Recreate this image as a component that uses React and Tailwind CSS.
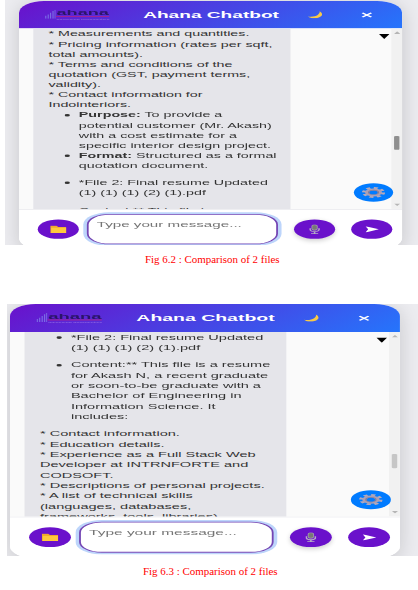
import React from "react";

function Logo() {
  return (
    <div className="relative h-[27px] w-[72px] font-bold text-[#2b1468]">
      <svg className="absolute left-0 top-[2px] h-[21px] w-[12px]" viewBox="0 0 12 21">
        <path d="M1 14v7M3.700 11v10M6.400 7v14M9.100 3v18M11.500 0v21" stroke="#7d74e6" strokeWidth="1.200" fill="none" />
      </svg>
      <span className="absolute left-[13px] top-[2px] origin-left scale-x-[1.27] text-[16px] leading-[16px]">ahana</span>
      <span className="absolute left-[12px] top-[17px] h-[2px] w-[60px] bg-[#b0208c]" />
      <span className="absolute left-[13px] top-[20px] origin-left scale-x-[1.04] whitespace-nowrap text-[5.300px] leading-[6px] text-[#8a63e0]">unlocking possibilities</span>
    </div>
  );
}

function Moon() {
  return (
    <svg className="h-[17px] w-[17px]" viewBox="0 0 17 17">
      <path d="M13.500 0.500C18 6 17 12.500 12 15.500C8 18 3 17 0.500 12.500C5 14 9 12.500 11.500 9C13.500 6 14 3 13.500 0.500Z" fill="#f7c948" />
    </svg>
  );
}

function Gear() {
  return (
    <svg className="h-[26px] w-[26px]" viewBox="0 0 28 28" fill="none">
      <circle cx="14" cy="14" r="11.500" stroke="#b3a9bd" strokeWidth="5" strokeDasharray="4.800 4.230" />
      <circle cx="14" cy="14" r="7.800" stroke="#aaa0b6" strokeWidth="5" />
      <circle cx="14" cy="14" r="6" stroke="#857d99" strokeWidth="1.500" />
    </svg>
  );
}

function RoundButton({ children, className = "" }) {
  return (
    <button className={"flex size-[46px] shrink-0 items-center justify-center rounded-full bg-[#6a11cb] " + className}>
      {children}
    </button>
  );
}

function ChatWidget({ children, thumb, offset }) {
  return (
    <div className="flex h-[590px] w-[429px] flex-col overflow-hidden rounded-[28px] bg-white font-['Liberation_Sans',Arial,sans-serif] shadow-[0_8px_32px_rgba(0,0,0,0.16)]">
      <header className="flex h-[65px] shrink-0 items-center bg-[linear-gradient(135deg,#6a11cb,#2575fc)] pl-[29px] text-white">
        <Logo />
        <h1 className="ml-[38px] w-[184px] whitespace-nowrap text-[21.400px] font-bold leading-6">Ahana Chatbot</h1>
        <Moon />
        <svg className="ml-[43px] h-[14px] w-[13px]" viewBox="0 0 13 14">
          <path d="M1.500 2l10 10M11.500 2l-10 10" stroke="#fff" strokeWidth="2.600" />
        </svg>
      </header>

      <div className="relative flex h-[428px] shrink-0 overflow-hidden bg-[#fafafa] pl-[16px]">
        <div className={"h-[460px] w-[288px] shrink-0 bg-[#e5e5ea] pl-[17px] text-[16px] leading-6 text-[#333] " + offset}>
          {children}
        </div>
        <svg className="ml-[99px] mt-[13px] h-[12px] w-[12px]" viewBox="0 0 12 12">
          <path d="M0 0h12L6 12z" fill="#000" />
        </svg>
        <div className="absolute right-0 top-0 flex h-full w-[12px] flex-col items-center justify-between bg-[#f1f1f1] py-[7px]">
          <svg className="h-[6px] w-[7px]" viewBox="0 0 7 6"><path d="M0 6L3.500 0L7 6z" fill="#b5b5b5" /></svg>
          <svg className="h-[6px] w-[7px]" viewBox="0 0 7 6"><path d="M0 0L3.500 6L7 0z" fill="#b5b5b5" /></svg>
          <span className={"absolute left-[3px] h-[33px] w-[6px] rounded-[2px] " + thumb} />
        </div>
        <button className="absolute left-[375px] top-[367px] flex size-[44px] items-center justify-center rounded-full bg-[#007bff]">
          <Gear />
        </button>
      </div>

      <footer className="flex grow items-start border-t-2 border-[#e8e8ec] bg-white pl-[21px] pt-[10px]">
        <RoundButton className="mt-[13px]">
          <svg className="h-[18px] w-[18px]" viewBox="0 0 18 18">
            <path d="M0 1h7l2 3h9v14H0z" fill="#f0a92c" />
            <path d="M1 6h17v12H1z" fill="#ffc83d" />
          </svg>
        </RoundButton>
        <div className="ml-[9px] h-[72px] w-[214px] rounded-[25px] border-2 border-[#7446b4] bg-white pl-[9px] pt-[15px] text-[17px] leading-5 text-[#757575] shadow-[0_0_0_4px_#bdd5fb]">
          Type your message...
        </div>
        <RoundButton className="ml-[18px] mt-[13px] shadow-[0_4px_8px_rgba(0,0,0,0.2)]">
          <svg className="h-[23px] w-[12px]" viewBox="0 0 12 23" fill="none">
            <rect x="3" y="0.500" width="6" height="13" rx="3" fill="#777" stroke="#b9b9b9" />
            <path d="M1 9v4q1 4 5 4t5-4V9M6 17v4M2 21.500h8" stroke="#b5adc4" strokeWidth="1.800" />
          </svg>
        </RoundButton>
        <RoundButton className="ml-[18px] mt-[13px]">
          <svg className="h-[15px] w-[15px]" viewBox="0 0 15 15"><path d="M0 0L15 7.500L0 15L3 7.500z" fill="#fff" /></svg>
        </RoundButton>
      </footer>
    </div>
  );
}

function Line({ children }) {
  return <div className="whitespace-nowrap">{children}</div>;
}

function Item({ children, className = "" }) {
  return (
    <li className={"relative " + className}>
      <span className="absolute -left-[16px] top-[9px] size-[6px] rounded-full bg-[#333]" />
      {children}
    </li>
  );
}

export default function App() {
  return (
    <main className="flex h-[590px] w-[418px] flex-col overflow-hidden bg-white">
      <section className="ml-[5px] h-[245px] shrink-0 overflow-hidden bg-[#ececf0] pl-[14.300px] pt-[1.200px]">
        <div className="w-[429px] origin-top-left scale-x-[0.893] scale-y-[0.4217]">
          <ChatWidget thumb="top-[255px] bg-[#8f8f8f]" offset="pt-[2px]">
            <Line>* Measurements and quantities.</Line>
            <Line>* Pricing information (rates per sqft,</Line>
            <Line>total amounts).</Line>
            <Line>* Terms and conditions of the</Line>
            <Line>quotation (GST, payment terms,</Line>
            <Line>validity).</Line>
            <Line>* Contact information for</Line>
            <Line>Indointeriors.</Line>
            <ul className="pl-[34px]">
              <Item>
                <Line><b>Purpose:</b> To provide a</Line>
                <Line>potential customer (Mr. Akash)</Line>
                <Line>with a cost estimate for a</Line>
                <Line>specific interior design project.</Line>
              </Item>
              <Item>
                <Line><b>Format:</b> Structured as a formal</Line>
                <Line>quotation document.</Line>
              </Item>
              <Item className="mt-4">
                <Line>*File 2: Final resume Updated</Line>
                <Line>(1) (1) (1) (2) (1).pdf</Line>
              </Item>
              <li className="mt-[18px]">
                <Line>Content:** This file is a resume</Line>
              </li>
            </ul>
          </ChatWidget>
        </div>
      </section>
      <p className="ml-[145px] mt-[5px] h-[18px] shrink-0 whitespace-nowrap font-['Liberation_Serif','Times_New_Roman',serif] text-[10.950px] leading-[18px] text-[#ff0000]">
        Fig 6.2 : Comparison of 2 files
      </p>
      <section className="ml-[7px] mt-[36px] h-[252px] shrink-0 overflow-hidden bg-[#ececf0] pl-[3px] pt-[0.300px]">
        <div className="w-[429px] origin-top-left scale-x-[0.909] scale-y-[0.431]">
          <ChatWidget thumb="top-[283px] bg-[#c6c6c6]" offset="pt-px">
            <ul className="pl-[34px]">
              <Item>
                <Line>*File 2: Final resume Updated</Line>
                <Line>(1) (1) (1) (2) (1).pdf</Line>
              </Item>
              <Item className="mt-4">
                <Line>Content:** This file is a resume</Line>
                <Line>for Akash N, a recent graduate</Line>
                <Line>or soon-to-be graduate with a</Line>
                <Line>Bachelor of Engineering in</Line>
                <Line>Information Science. It</Line>
                <Line>includes:</Line>
              </Item>
            </ul>
            <div className="mt-4">
              <Line>* Contact information.</Line>
              <Line>* Education details.</Line>
              <Line>* Experience as a Full Stack Web</Line>
              <Line>Developer at INTRNFORTE and</Line>
              <Line>CODSOFT.</Line>
              <Line>* Descriptions of personal projects.</Line>
              <Line>* A list of technical skills</Line>
              <Line>(languages, databases,</Line>
              <Line>frameworks, tools, libraries).</Line>
            </div>
          </ChatWidget>
        </div>
      </section>
      <p className="ml-[143px] mt-[6px] h-[18px] shrink-0 whitespace-nowrap font-['Liberation_Serif','Times_New_Roman',serif] text-[10.950px] leading-[18px] text-[#ff0000]">
        Fig 6.3 : Comparison of 2 files
      </p>
    </main>
  );
}
